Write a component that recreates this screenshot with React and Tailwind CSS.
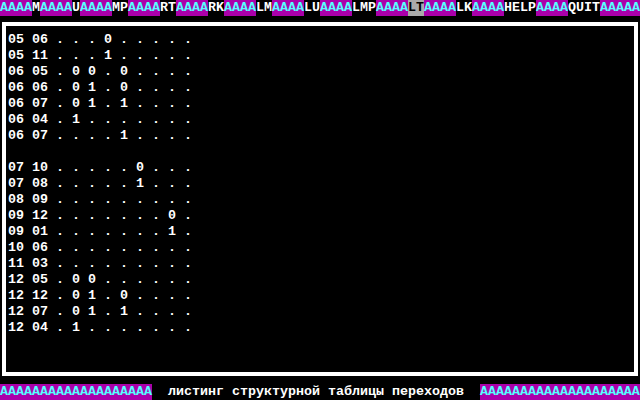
import React from 'react';

// Полоса меню сверху: "A" - заливка, остальное - пункты
const topBar = [
    ['AAAA', 'fill'], ['M', 'item'], ['AAAA', 'fill'], ['U', 'item'], ['AAAA', 'fill'], ['MP', 'item'],
    ['AAAA', 'fill'], ['RT', 'item'], ['AAAA', 'fill'], ['RK', 'item'], ['AAAA', 'fill'], ['LM', 'item'],
    ['AAAA', 'fill'], ['LU', 'item'], ['AAAA', 'fill'], ['LMP', 'item'], ['AAAA', 'fill'], ['LT', 'active'],
    ['AAAA', 'fill'], ['LK', 'item'], ['AAAA', 'fill'], ['HELP', 'item'], ['AAAA', 'fill'], ['QUIT', 'item'],
    ['AAAAA', 'fill'],
];

const rows = [
    '05 06 . . . 0 . . . . .',
    '05 11 . . . 1 . . . . .',
    '06 05 . 0 0 . 0 . . . .',
    '06 06 . 0 1 . 0 . . . .',
    '06 07 . 0 1 . 1 . . . .',
    '06 04 . 1 . . . . . . .',
    '06 07 . . . . 1 . . . .',
    '',
    '07 10 . . . . . 0 . . .',
    '07 08 . . . . . 1 . . .',
    '08 09 . . . . . . . . .',
    '09 12 . . . . . . . 0 .',
    '09 01 . . . . . . . 1 .',
    '10 06 . . . . . . . . .',
    '11 03 . . . . . . . . .',
    '12 05 . 0 0 . . . . . .',
    '12 12 . 0 1 . 0 . . . .',
    '12 07 . 0 1 . 1 . . . .',
    '12 04 . 1 . . . . . . .',
];

const segClass = {
    fill: 'bg-[#aa00aa] text-[#55ffff]',
    item: 'bg-black text-white',
    active: 'bg-[#aaaaaa] text-black',
};

const App = () => {
    return (
        <div
            className="w-[640px] h-[400px] bg-black text-white text-[13.33px] leading-[16px] font-bold overflow-hidden flex flex-col"
            style={{ fontFamily: '"Liberation Mono", "DejaVu Sans Mono", monospace' }}
        >
            {/* Верхнее меню */}
            <div className="h-[16px] flex whitespace-pre flex-shrink-0">
                {topBar.map(([text, type], i) => (
                    <span key={i} className={segClass[type]}>{text}</span>
                ))}
            </div>

            {/* Рамка с листингом */}
            <div className="h-[368px] px-[2px] pt-[6px] pb-[8px] flex-shrink-0">
                <div className="h-full border-4 border-white pl-[2px] pt-[6px]">
                    {rows.map((row, i) => (
                        <div key={i} className="h-[16px] whitespace-pre">{row}</div>
                    ))}
                </div>
            </div>

            {/* Нижняя строка состояния */}
            <div className="h-[16px] flex whitespace-pre flex-shrink-0">
                <span className={segClass.fill}>{'A'.repeat(19)}</span>
                <span className="text-white">{'  листинг структурной таблицы переходов  '}</span>
                <span className={segClass.fill}>{'A'.repeat(20)}</span>
            </div>
        </div>
    );
};

export default App;
